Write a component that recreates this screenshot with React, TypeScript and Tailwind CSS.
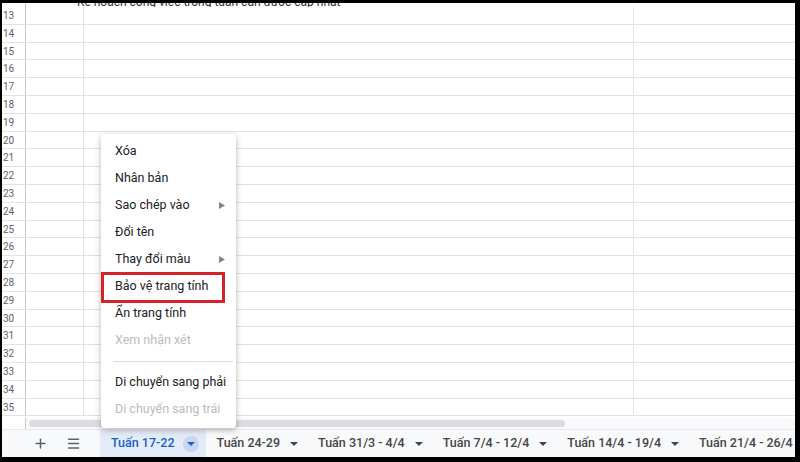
import React from "react";
import { Plus, Menu } from "lucide-react";

const rows = Array.from({ length: 23 }, (_, i) => 13 + i);

type Item = { label: string; arrow?: boolean; disabled?: boolean; sep?: boolean };
const items: Item[] = [
  { label: "Xóa" },
  { label: "Nhân bản" },
  { label: "Sao chép vào", arrow: true },
  { label: "Đổi tên" },
  { label: "Thay đổi màu", arrow: true },
  { label: "Bảo vệ trang tính" },
  { label: "Ẩn trang tính" },
  { label: "Xem nhận xét", disabled: true },
  { label: "", sep: true },
  { label: "Di chuyển sang phải" },
  { label: "Di chuyển sang trái", disabled: true },
];

const tabs = ["Tuấn 24-29", "Tuấn 31/3 - 4/4", "Tuấn 7/4 - 12/4", "Tuấn 14/4 - 19/4", "Tuấn 21/4 - 26/4"];

function Caret({ color }: { color: string }) {
  return (
    <svg width="8" height="4" viewBox="0 0 8 4">
      <polygon points="0,0 8,0 4,4" fill={color} />
    </svg>
  );
}

export default function App() {
  return (
    <div className="relative w-[800px] h-[462px] bg-black pt-[3px] pl-[2px] pr-[5px] pb-[5px] font-['Roboto','Liberation_Sans',sans-serif]">
      <div className="flex flex-col w-full h-full bg-white overflow-hidden">
        {/* grid */}
        <div className="h-[415px] shrink-0 overflow-hidden">
          <div className="h-[4px] overflow-hidden flex">
            <div className="w-[24px] shrink-0 border-r border-[#c7c7c7]" />
            <div className="pl-[51px] -mt-[7px] text-[12px] leading-[12px] text-[#333] whitespace-nowrap">
              Kế hoạch công việc trong tuần cần được cập nhật
            </div>
          </div>
          {rows.map((r) => (
            <div key={r} className="flex h-[17.8px] border-b border-[#e2e3e3]">
              <div className="w-[24px] shrink-0 border-r border-[#c7c7c7] text-[10px] leading-[17px] text-[#5f6368] pl-[1px]">{r}</div>
              <div className="w-[58px] shrink-0 border-r border-[#e2e3e3]" />
              <div className="w-[550px] shrink-0 border-r border-[#e2e3e3]" />
              <div className="flex-1" />
            </div>
          ))}
        </div>
        {/* scrollbar */}
        <div className="h-[12px] shrink-0 bg-[#f8f9fa] flex items-center border-b border-[#e8eaed]">
          <div className="w-[24px] shrink-0 h-full border-r border-[#c7c7c7] bg-white" />
          <div className="ml-[3px] w-[536px] shrink-0 h-[7px] rounded-full bg-[#dadce0]" />
        </div>
        {/* tab bar */}
        <div className="flex-1 flex items-stretch bg-[#f8f9fa] text-[12.5px] font-medium">
          <div className="w-[98px] shrink-0 flex items-center">
            <div className="w-[46px] shrink-0 flex justify-end">
              <Plus size={15} strokeWidth={2.4} className="text-[#5f6368]" />
            </div>
            <div className="ml-[16px] w-[18px] shrink-0 flex justify-center">
              <Menu size={15} strokeWidth={2.4} className="text-[#5f6368]" />
            </div>
          </div>
          <div className="shrink-0 flex items-center bg-[#e3ebf8] pl-[11px] pr-[7px] text-[#1a5fc4]">
            <span className="whitespace-nowrap">Tuấn 17-22</span>
            <span className="ml-[8px] w-[16px] h-[16px] rounded-full bg-[#c8d7f1] flex items-center justify-center">
              <Caret color="#1a5fc4" />
            </span>
          </div>
          {tabs.map((t) => (
            <div key={t} className="shrink-0 flex items-center pl-[11px] pr-[7px] text-[#444746]">
              <span className="whitespace-nowrap">{t}</span>
              {t !== "Tuấn 21/4 - 26/4" && (
                <span className="ml-[8px] w-[12px] flex justify-center">
                  <Caret color="#444746" />
                </span>
              )}
            </div>
          ))}
        </div>
      </div>

      {/* context menu */}
      <div className="absolute left-[101px] top-[134px] w-[135px] h-[294px] bg-white rounded-[4px] shadow-[0_2px_6px_rgba(0,0,0,0.28)] pt-[4px] text-[12.5px] text-[#202124]">
        {items.map((it, i) =>
          it.sep ? (
            <div key={i} className="h-[15px] flex items-center ml-[12px] mr-[3px]">
              <div className="w-full h-px bg-[#dadce0]" />
            </div>
          ) : (
            <div
              key={i}
              className={`h-[27px] flex items-center pl-[14px] pr-[11px] ${it.disabled ? "text-[#b8bcc1]" : ""}`}
            >
              <span className="flex-1 whitespace-nowrap">{it.label}</span>
              {it.arrow && (
                <svg width="6" height="7" viewBox="0 0 6 7">
                  <polygon points="0,0 6,3.5 0,7" fill="#80868b" />
                </svg>
              )}
            </div>
          )
        )}
      </div>

      {/* red annotation box */}
      <div className="absolute left-[101px] top-[272px] w-[124px] h-[31px] border-[3px] border-[#d4212b]" />
    </div>
  );
}
